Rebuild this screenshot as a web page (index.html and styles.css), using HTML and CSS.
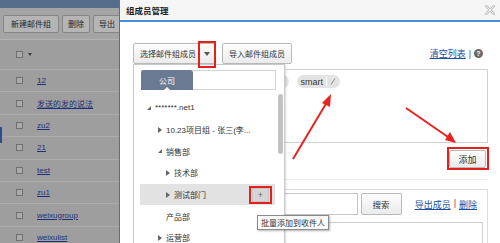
FILE: index.html
```html
<!DOCTYPE html>
<html lang="zh-CN">
<head>
<meta charset="utf-8">
<title>组成员管理</title>
<link rel="stylesheet" href="styles.css">
</head>
<body>
<div class="app">
  <div class="page">
    <div class="topstrip"></div>
    <div class="ptool">
      <span class="pbtn">新建邮件组</span>
      <span class="pbtn sm">删除</span>
      <span class="pbtn sm">导出</span>
    </div>
    <div class="phead"><span class="cb"></span><span class="caret"></span></div>
    <div class="prow"><span class="cb"></span><a>12</a></div>
    <div class="prow"><span class="cb"></span><a>发送的发的说法</a></div>
    <div class="prow"><span class="cb"></span><a>zu2</a></div>
    <div class="prow"><span class="cb"></span><a>21</a></div>
    <div class="prow"><span class="cb"></span><a>test</a></div>
    <div class="prow"><span class="cb"></span><a>zu1</a></div>
    <div class="prow"><span class="cb"></span><a>weixugroup</a></div>
    <div class="prow"><span class="cb"></span><a>weixulist</a></div>
    <span class="navmark"></span>
  </div>

  <div class="dlg">
    <div class="dlg-title">
      <span>组成员管理</span>
      <svg class="close" width="10" height="10" viewBox="0 0 10 10">
        <path d="M1 1 L9 9 M9 1 L1 9" stroke="#c4c4c4" stroke-width="2.6" stroke-linecap="square"/>
        <path d="M1 1 L9 9 M9 1 L1 9" stroke="#f5f5f5" stroke-width="0.9"/>
      </svg>
    </div>
    <div class="dlg-body">
      <div class="dtool">
        <div class="btn sel"><span>选择邮件组成员</span><span class="sel-arr"></span></div>
        <div class="btn imp">导入邮件组成员</div>
        <div class="clear"><a>清空列表</a><span class="bar">|</span><span class="help">?</span></div>
      </div>
      <div class="recip">
        <span class="tag">admin<i></i><svg class="pen" width="6" height="7" viewBox="0 0 6 7"><path d="M1 6.5 L5 0.5" stroke="#888" stroke-width="1"/></svg></span>
        <span class="tag">sales<i></i><svg class="pen" width="6" height="7" viewBox="0 0 6 7"><path d="M1 6.5 L5 0.5" stroke="#888" stroke-width="1"/></svg></span>
        <span class="tag">smart<i></i><svg class="pen" width="6" height="7" viewBox="0 0 6 7"><path d="M1 6.5 L5 0.5" stroke="#888" stroke-width="1"/></svg></span>
      </div>
      <div class="addrow"><span class="btn add">添加</span></div>
      <div class="sep"></div>
      <div class="panel">
        <div class="srow">
          <div class="inp"></div>
          <span class="btn srch">搜索</span>
          <span class="links"><a>导出成员</a><span class="bar">|</span><a>删除</a></span>
        </div>
        <div class="mlist"></div>
      </div>
    </div>

    <div class="dd">
      <div class="tabs"><span class="tab">公司</span></div>
      <div class="tree">
        <div class="node l0"><span class="tw e"></span>*******.net1</div>
        <div class="node l1"><span class="tw c"></span>10.23项目组 - 张三(李...</div>
        <div class="node l1"><span class="tw e"></span>销售部</div>
        <div class="node l2"><span class="tw c"></span>技术部</div>
        <div class="node l2 hl"><span class="tw c"></span>测试部门<span class="plus">+</span></div>
        <div class="node l1"><span class="tw"></span>产品部</div>
        <div class="node l1"><span class="tw c"></span>运营部</div>
      </div>
      <span class="sbar"></span>
    </div>
  </div>

  <span class="mk mk1"></span>
  <span class="mk mk2"></span>
  <span class="mk mk3"></span>
  <div class="tip">批量添加到收件人</div>

  <svg class="arrows" width="500" height="243" viewBox="0 0 500 243">
    <line x1="293" y1="159" x2="327" y2="102" stroke="#e8231d" stroke-width="2"/>
    <polygon points="331,94 322,103 330,107" fill="#e8231d"/>
    <line x1="406" y1="108" x2="448" y2="137" stroke="#e8231d" stroke-width="2"/>
    <polygon points="456,143 445,140 450,132" fill="#e8231d"/>
  </svg>
</div>
</body>
</html>
```

FILE: styles.css
```css
* { box-sizing: border-box; margin: 0; padding: 0; }
html, body { width: 500px; height: 243px; overflow: hidden; }
body {
  font-family: "Liberation Sans", "Noto Sans CJK SC", sans-serif;
  font-size: 8px;
  color: #333;
  background: #fff;
}
.app { position: relative; display: flex; width: 500px; height: 243px; overflow: hidden; }

/* dimmed page behind the dialog */
.page { position: relative; width: 119px; flex: none; background: #9e9e9e; color: #262626; }
.topstrip { height: 8px; background: #566d8c; }
.ptool {
  height: 32px; display: flex; align-items: center; gap: 3px; padding-left: 3px;
  background: #a4a4a4; border-bottom: 1px solid #b3b3b3;
}
.pbtn {
  height: 18px; padding: 0 7px; display: flex; align-items: center; white-space: nowrap;
  border: 1px solid #868686; border-radius: 2px; background: #b5b5b5;
}
.pbtn.sm { padding: 0 5px; }
.phead { height: 30px; display: flex; align-items: center; padding-left: 16px; border-bottom: 1px solid #acacac; }
.prow { height: 22.4px; display: flex; align-items: center; padding-left: 16px; border-bottom: 1px solid #acacac; }
.cb { width: 7px; height: 7px; border: 1px solid #707070; background: #ababab; flex: none; }
.caret { margin-left: 5px; border-top: 3px solid #3a3a3a; border-left: 2.5px solid transparent; border-right: 2.5px solid transparent; }
.prow a { margin-left: 14px; color: #1f2f78; text-decoration: underline; white-space: nowrap; }
.navmark { position: absolute; left: 0; top: 127px; width: 2px; height: 16px; background: #2c4f8c; }

/* dialog */
.dlg { position: relative; flex: 1; background: #fff; border-left: 1px solid #6c6c6c; }
.dlg-title {
  height: 22px; background: #f5f5f5; border-bottom: 2px solid #4a8dd6;
  display: flex; align-items: center; justify-content: space-between;
  padding: 0 5px 0 6px; font-size: 8.5px; font-weight: bold; color: #222;
}
.close { display: block; }
.dlg-body { padding: 21px 12px 0 13px; }
.dtool { height: 21px; display: flex; align-items: center; }
.btn {
  height: 21px; display: flex; align-items: center; justify-content: center; white-space: nowrap;
  border: 1px solid #bababa; border-radius: 2px; background: linear-gradient(#fdfdfd, #ebebeb); color: #333;
}
.sel { width: 82px; justify-content: flex-start; padding-left: 6px; }
.sel-arr { margin-left: auto; width: 15px; display: flex; justify-content: center; }
.sel-arr::before { content: ""; border-top: 4px solid #555; border-left: 3px solid transparent; border-right: 3px solid transparent; }
.imp { width: 70px; margin-left: 7px; }
.clear { margin-left: auto; display: flex; align-items: center; font-size: 9px; padding-right: 5px; }
.clear a, .links a { color: #1c4ea3; text-decoration: underline; }
.bar { margin: 0 3px; color: #555; }
.help {
  width: 9px; height: 9px; border-radius: 50%; background: #6a6a6a; color: #fff;
  font-size: 7px; font-weight: bold; display: flex; align-items: center; justify-content: center;
}
.recip {
  margin-top: 5px; height: 74px; border: 1px solid #d2d2d2;
  padding: 5px 4px 0 59px; display: flex; gap: 8px; align-items: flex-start;
}
.tag {
  height: 13px; border-radius: 7px; background: #e3e3e3; display: flex; align-items: center;
  padding: 0 4px; font-size: 9px; color: #333;
}
.tag i { width: 1px; height: 9px; background: #fff; margin: 0 3px; }
.pen { display: block; }
.addrow { margin-top: 7px; display: flex; justify-content: flex-end; padding-right: 2px; }
.add { width: 37px; height: 18px; font-size: 9px; }
.sep { margin-top: 11px; height: 1px; background: #efefef; }
.panel { margin-top: 9px; height: 60px; border: 1px solid #dcdcdc; border-bottom: none; padding: 3px 4px 0 4px; }
.srow { height: 22px; display: flex; align-items: center; }
.inp { flex: 1; height: 22px; border: 1px solid #c6c6c6; }
.srch { width: 41px; height: 22px; margin-left: 3px; font-size: 8.5px; }
.links { margin: 0 6px 0 13px; display: flex; font-size: 9px; }
.mlist { margin-top: 7px; height: 40px; border: 1px solid #d0d0d0; border-bottom: none; }

/* member picker dropdown */
.dd {
  position: absolute; left: 13px; top: 64px; width: 152px; height: 185px;
  background: #fff; border: 1px solid #c9c9c9; box-shadow: 1px 1px 2px rgba(0,0,0,.15);
}
.tabs { margin: 5px 8px 0 7px; height: 20px; border: 1px solid #d4d4d4; display: flex; }
.tab {
  position: relative; width: 52px; margin: -1px 0 -1px -1px; border-radius: 3px 3px 0 0;
  background: #6b7a93; color: #fff; display: flex; align-items: center; justify-content: center;
}
.tab::after {
  content: ""; position: absolute; left: 50%; bottom: 0; margin-left: -3px;
  border-bottom: 3px solid #fff; border-left: 3px solid transparent; border-right: 3px solid transparent;
}
.tree { margin-top: 7px; }
.node { position: relative; height: 21.7px; margin: 0 9px 0 6px; display: flex; align-items: center; color: #333; white-space: nowrap; }
.l0 { padding-left: 7px; }
.l1 { padding-left: 18px; }
.l2 { padding-left: 26px; }
.tw { width: 8px; height: 8px; flex: none; display: flex; align-items: center; }
.tw.c::before { content: ""; border-left: 4px solid #666; border-top: 3px solid transparent; border-bottom: 3px solid transparent; }
.tw.e::before { content: ""; border-bottom: 4px solid #666; border-left: 4px solid transparent; }
.hl { background: #e2e2e2; }
.plus {
  position: absolute; right: 6px; top: 4px; width: 17px; height: 14px;
  background: #d5d5d5; border: 1px solid #c5c5c5; color: #666; font-size: 9px;
  display: flex; align-items: center; justify-content: center;
}
.sbar { position: absolute; right: 1px; top: 29px; width: 5px; height: 60px; border-radius: 3px; background: #c2c2c2; }

/* annotations */
.mk { position: absolute; border: 2px solid #e3211c; }
.mk1 { left: 198px; top: 41px; width: 18px; height: 27px; }
.mk2 { left: 249px; top: 186px; width: 23px; height: 18px; }
.mk3 { left: 447px; top: 147px; width: 42px; height: 23px; }
.tip {
  position: absolute; left: 257px; top: 215px; height: 15px; padding: 0 3px;
  border: 1px solid #8a8a8a; background: #fbfbfb; box-shadow: 1px 1px 2px rgba(0,0,0,.3);
  display: flex; align-items: center; color: #333; white-space: nowrap;
}
.arrows { position: absolute; left: 0; top: 0; pointer-events: none; }
```
